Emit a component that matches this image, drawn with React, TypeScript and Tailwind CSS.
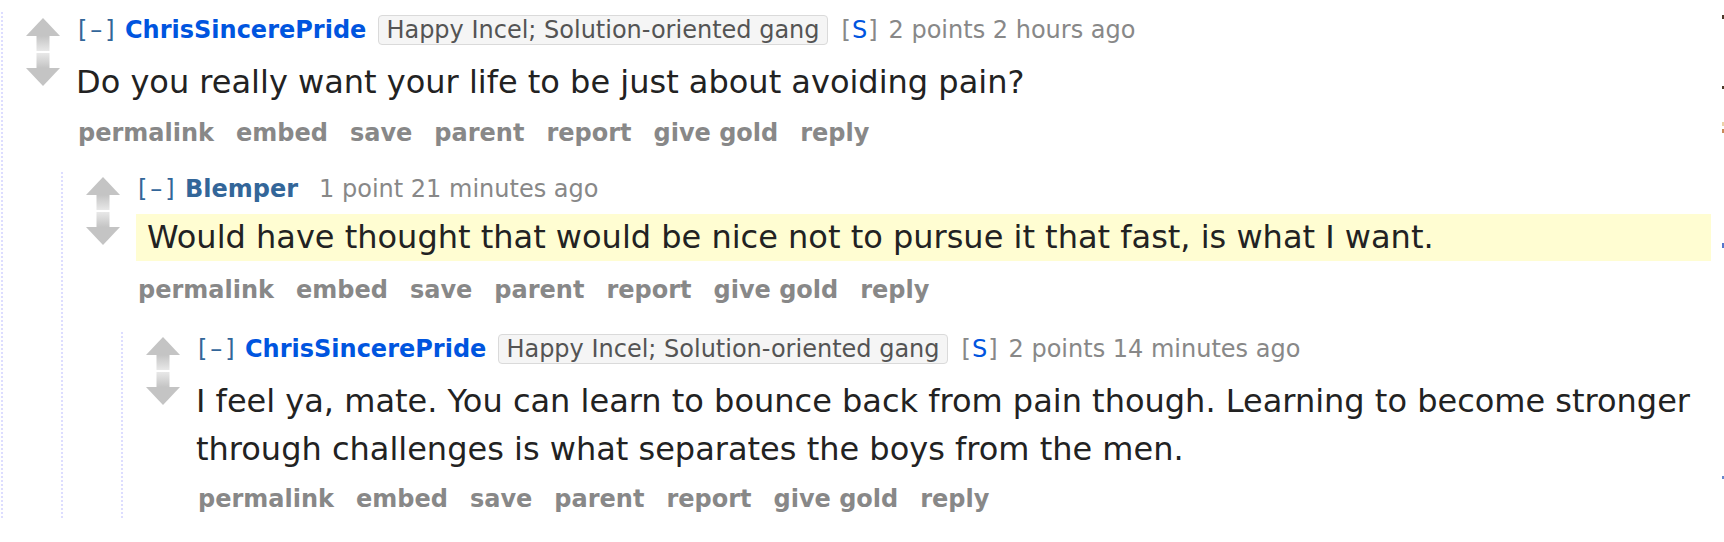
import React from "react";

const Arrows = () => (
  <svg width="34" height="68" viewBox="0 0 34 68">
    <defs>
      <linearGradient id="upg" x1="0" y1="0" x2="0" y2="1">
        <stop offset="0" stopColor="#c4c4c4" />
        <stop offset="1" stopColor="#e8e8e8" />
      </linearGradient>
      <linearGradient id="dng" x1="0" y1="0" x2="0" y2="1">
        <stop offset="0" stopColor="#e8e8e8" />
        <stop offset="1" stopColor="#c4c4c4" />
      </linearGradient>
    </defs>
    <polygon points="17,0 34,18 0,18" fill="#c4c4c4" />
    <rect x="10.5" y="18" width="13" height="15" fill="url(#upg)" />
    <rect x="10.5" y="35" width="13" height="15" fill="url(#dng)" />
    <polygon points="0,50 34,50 17,68" fill="#c4c4c4" />
  </svg>
);

const Flair = () => (
  <span className="ml-[12px] h-[30px] flex items-center px-[7px] bg-[#f5f5f5] border border-[#dadada] rounded-[4px] text-[#545454]">
    Happy Incel; Solution-oriented gang
  </span>
);

const Buttons = ({ mt }: { mt: string }) => (
  <div className={`${mt} h-[30px] flex items-center gap-[22px] text-[24px] font-bold text-[#888888] pl-[2px]`}>
    <span>permalink</span>
    <span>embed</span>
    <span>save</span>
    <span>parent</span>
    <span>report</span>
    <span>give gold</span>
    <span>reply</span>
  </div>
);

type CommentProps = {
  header: React.ReactNode;
  body: React.ReactNode;
  buttonsMt: string;
  childMt?: string;
  children?: React.ReactNode;
};

const Comment = ({ header, body, buttonsMt, childMt, children }: CommentProps) => (
  <div className="pt-[2px]">
    <div className="flex">
      <div className="w-[73px] shrink-0 pl-[23px] pt-[3px]">
        <Arrows />
      </div>
      <div className="flex-1 min-w-0">
        <div className="h-[30px] flex items-center text-[24px] text-[#888888] whitespace-nowrap">
          {header}
        </div>
        {body}
        <Buttons mt={buttonsMt} />
      </div>
    </div>
    {children && (
      <div className={`ml-[58px] ${childMt ?? ""} border-l-2 border-dotted border-[#ddddff]`}>
        {children}
      </div>
    )}
  </div>
);

const Expand = () => (
  <span className="text-[#336699] w-[49px] shrink-0 pl-[2px] tracking-[3px]">[–]</span>
);

const Submitter = () => (
  <span className="ml-[14px] tracking-[1px]">
    [<span className="text-[#0055df]">S</span>]
  </span>
);

export default function App() {
  return (
    <div className="flex w-[1724px] h-[542px] bg-white overflow-hidden font-['DejaVu_Sans',sans-serif]">
      <div className="flex-1 min-w-0 pr-[11px] pt-[12px]">
        <div className="ml-[1px] pt-[1px] border-l-2 border-dotted border-[#ddddff]">
          <Comment
            buttonsMt="mt-[12px]"
            childMt="mt-[24px]"
            header={
              <>
                <Expand />
                <span className="font-bold text-[#0055df]">ChrisSincerePride</span>
                <Flair />
                <Submitter />
                <span className="ml-[10px]">2 points 2 hours ago</span>
              </>
            }
            body={
              <p className="mt-[13px] text-[32px] leading-[48px] text-[#222222]">
                Do you really want your life to be just about avoiding pain?
              </p>
            }
          >
            <Comment
              buttonsMt="mt-[14px]"
              childMt="mt-[27px]"
              header={
                <>
                  <Expand />
                  <span className="font-bold text-[#336699]">Blemper</span>
                  <span className="ml-[21px]">1 point 21 minutes ago</span>
                </>
              }
              body={
                <div className="mt-[10px] bg-[#fffdd2] pl-[11px] text-[32px] leading-[47px] text-[#222222]">
                  Would have thought that would be nice not to pursue it that fast, is what I want.
                </div>
              }
            >
              <div className="pb-[4px]">
                <Comment
                  buttonsMt="mt-[11px]"
                  header={
                    <>
                      <Expand />
                      <span className="font-bold text-[#0055df]">ChrisSincerePride</span>
                      <Flair />
                      <Submitter />
                      <span className="ml-[10px]">2 points 14 minutes ago</span>
                    </>
                  }
                  body={
                    <p className="mt-[13px] text-[32px] leading-[48px] text-[#222222]">
                      I feel ya, mate. You can learn to bounce back from pain though. Learning to become stronger through challenges is what separates the boys from the men.
                    </p>
                  }
                />
              </div>
            </Comment>
          </Comment>
        </div>
      </div>
      <div className="w-[2px] shrink-0 flex flex-col">
        <div className="mt-[15px] h-[4px] bg-[#4a3a2a]" />
        <div className="mt-[67px] h-[3px] bg-[#4a3a2a]" />
        <div className="mt-[33px] h-[4px] bg-[#ecd2a8]" />
        <div className="mt-[3px] h-[4px] bg-[#c88a5a]" />
        <div className="mt-[110px] h-[5px] bg-[#5577cc]" />
        <div className="mt-[228px] h-[3px] bg-[#6688cc]" />
      </div>
    </div>
  );
}
